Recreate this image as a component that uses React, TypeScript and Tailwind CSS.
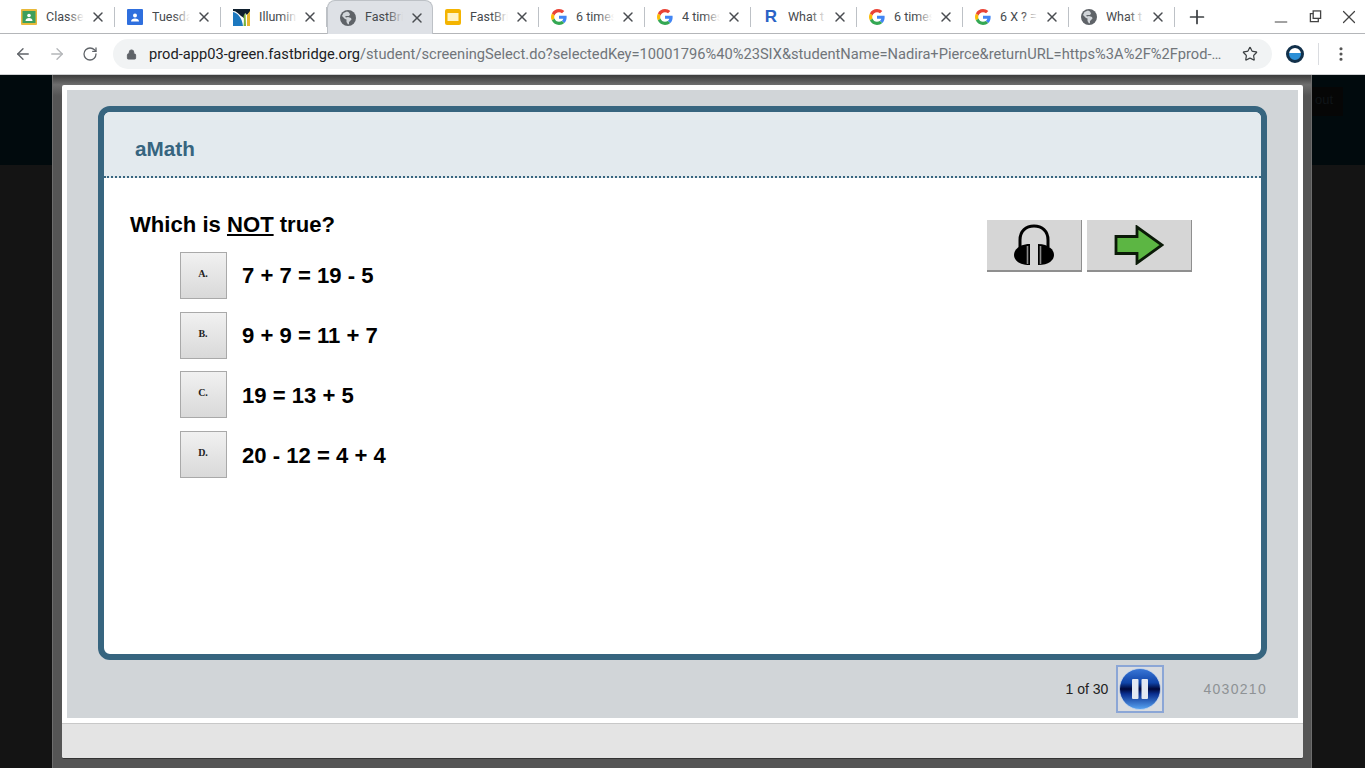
import { ArrowLeft, ArrowRight, Lock, Minus, MoreVertical, Plus, RotateCw, Star, X } from "lucide-react";
import type { ReactNode } from "react";

const GoogleG = () => (
  <svg viewBox="0 0 48 48" className="w-4 h-4">
    <path fill="#EA4335" d="M24 9.500c3.500 0 6.700 1.300 9.100 3.500l6.800-6.800C35.800 2.400 30.300 0 24 0 14.600 0 6.500 5.400 2.600 13.200l7.900 6.200C12.400 13.600 17.700 9.500 24 9.500z" />
    <path fill="#4285F4" d="M46.900 24.500c0-1.600-.1-3.100-.4-4.500H24v9h12.900c-.6 3-2.200 5.500-4.700 7.200l7.700 6c4.500-4.200 7-10.300 7-17.700z" />
    <path fill="#FBBC05" d="M10.500 28.600c-.5-1.400-.8-3-.8-4.600s.3-3.200.8-4.600l-7.900-6.200C.9 16.500 0 20.100 0 24s.9 7.500 2.600 10.800l7.900-6.200z" />
    <path fill="#34A853" d="M24 48c6.500 0 11.900-2.100 15.900-5.800l-7.700-6c-2.200 1.400-4.900 2.300-8.200 2.300-6.300 0-11.600-4.100-13.500-9.900l-7.900 6.200C6.500 42.600 14.600 48 24 48z" />
  </svg>
);

const Globe = () => (
  <svg viewBox="0 0 16 16" className="w-4 h-4">
    <circle cx="8" cy="8" r="8" fill="#5f6368" />
    <path fill="#dee1e6" d="M7 1.500 3.500 3 2 6l3 3 1.500.5V12l1.500 2.500 1-.5V12l2.500-2.500-.5-1.500-3-1-2 .5-1-1 1.500-.5L9 6l1-1.500L9 2.500z" opacity="0.9" />
  </svg>
);

const Classroom = () => (
  <svg viewBox="0 0 16 16" className="w-4 h-4">
    <rect width="16" height="16" rx="1" fill="#e8b93a" />
    <rect x="1.500" y="2" width="13" height="12" fill="#3d9f5c" />
    <circle cx="8" cy="6.500" r="1.800" fill="#fff" />
    <path d="M4.500 12c0-2 1.500-3 3.500-3s3.500 1 3.500 3z" fill="#fff" />
  </svg>
);

const Roster = () => (
  <svg viewBox="0 0 16 16" className="w-4 h-4">
    <rect width="16" height="16" rx="1" fill="#2f6fde" />
    <circle cx="8" cy="6.500" r="2" fill="#fff" />
    <path d="M4 12.500c0-2 1.800-3 4-3s4 1 4 3z" fill="#fff" />
  </svg>
);

const Illuminate = () => (
  <svg viewBox="0 0 17 17" className="h-[17px] w-[17px]">
    <path d="M0 0h17v3l-3 3-2-2-1 5-3-2C5 4 3 2 0 2z" fill="#10202e" />
    <path d="M0 3c5 1 9 6 10 14H0z" fill="#1c78bf" />
    <path d="M10.500 17c.5-4 .5-8 0-10l2-3 .5 13z" fill="#7bb33e" />
    <path d="M14 17V6l3-4v15z" fill="#e6b62f" />
  </svg>
);

const Slides = () => (
  <svg viewBox="0 0 16 16" className="w-4 h-4">
    <rect width="16" height="16" rx="2" fill="#f4b400" />
    <rect x="2.500" y="4" width="11" height="8" fill="#fff3c4" />
  </svg>
);

const Tab = ({ icon, title, active }: { icon: ReactNode; title: string; active?: boolean }) => (
  <div
    className={`relative flex h-[34px] w-[106px] shrink-0 items-center pl-3 pt-px ${
      active ? "rounded-t-lg border border-b-0 border-[#bdc1c6] bg-[#dee1e6]" : ""
    }`}
  >
    {icon}
    <div className="relative ml-[9px] w-[38px] overflow-hidden whitespace-nowrap text-[12.5px] text-[#45494d]">
      {title}
      <div className={`absolute inset-y-0 right-0 w-4 bg-linear-to-r from-transparent ${active ? "to-[#dee1e6]" : "to-white"}`} />
    </div>
    <X className="absolute left-[81px] top-[9px] h-4 w-4 text-[#4a4d51]" strokeWidth={2.2} />
    {!active && <div className="absolute right-0 top-[7px] h-5 w-px bg-[#bdc1c6]" />}
  </div>
);

const options = [
  { letter: "A.", text: "7 + 7 = 19 - 5" },
  { letter: "B.", text: "9 + 9 = 11 + 7" },
  { letter: "C.", text: "19 = 13 + 5" },
  { letter: "D.", text: "20 - 12 = 4 + 4" },
];

const App = () => {
  return (
    <div className="flex h-screen w-full flex-col overflow-hidden bg-white font-['Roboto',sans-serif]">
      {/* tab strip */}
      <div className="flex h-[34px] shrink-0 items-center border-b border-[#b4b6b9] pl-[9px]">
        <Tab icon={<Classroom />} title="Classes" />
        <Tab icon={<Roster />} title="Tuesday" />
        <Tab icon={<Illuminate />} title="Illuminate" />
        <Tab icon={<Globe />} title="FastBridge" active />
        <Tab icon={<Slides />} title="FastBridge" />
        <Tab icon={<GoogleG />} title="6 times" />
        <Tab icon={<GoogleG />} title="4 times" />
        <Tab icon={<span className="w-4 text-center font-['Liberation_Sans',sans-serif] text-[17px] font-bold leading-4 text-[#2b63c6]">R</span>} title="What t" />
        <Tab icon={<GoogleG />} title="6 times" />
        <Tab icon={<GoogleG />} title="6 X ? =" />
        <Tab icon={<Globe />} title="What t" />
        <Plus className="ml-[11px] mt-px h-[22px] w-[22px] text-[#3c4043]" strokeWidth={1.9} />
        <div className="ml-auto flex items-center pr-[5px] text-[#444]">
          <Minus className="mt-[11px] h-5 w-5" strokeWidth={1.2} />
          <svg viewBox="0 0 14 14" className="ml-[18px] h-[13px] w-[13px]" fill="none" stroke="#444" strokeWidth="1.4">
            <rect x="4.500" y="1" width="8" height="8" />
            <path d="M4.500 4H1.500v8.500H10V9" />
          </svg>
          <X className="ml-[16px] mt-px h-[22px] w-[22px]" strokeWidth={1.3} />
        </div>
      </div>

      {/* address bar */}
      <div className="flex h-[40px] shrink-0 items-center">
        <ArrowLeft className="ml-[14px] h-[18px] w-[18px] text-[#5f6368]" strokeWidth={1.8} />
        <ArrowRight className="ml-[16px] h-[18px] w-[18px] text-[#b4b6b9]" strokeWidth={1.8} />
        <RotateCw className="ml-[16px] h-[16px] w-[16px] text-[#5f6368]" strokeWidth={1.9} />
        <div className="ml-[15px] flex h-[30px] w-[1159px] items-center rounded-full bg-[#f1f3f4] pl-[13px]">
          <Lock className="h-[11px] w-[11px] fill-[#5f6368] text-[#5f6368]" strokeWidth={2} />
          <div className="ml-[12px] w-[1074px] overflow-hidden text-ellipsis whitespace-nowrap text-[14.67px] text-[#70757a]">
            <span className="text-[#202124]">prod-app03-green.fastbridge.org</span>
            /student/screeningSelect.do?selectedKey=10001796%40%23SIX&studentName=Nadira+Pierce&returnURL=https%3A%2F%2Fprod-app03-green.fastbridge.org
          </div>
          <Star className="ml-[19px] h-[16px] w-[16px] text-[#3c4043]" strokeWidth={1.8} />
        </div>
        <div className="ml-[14px] h-[18px] w-[18px] overflow-hidden rounded-full border-[3px] border-[#12304a] bg-linear-to-b from-white from-45% to-[#2b8fd6] to-45%" />
        <div className="ml-[14px] h-[22px] w-px bg-[#dadce0]" />
        <MoreVertical className="ml-[13px] h-[18px] w-[18px] text-[#555]" strokeWidth={2.2} />
      </div>

      {/* page */}
      <div className="relative flex-1 border-t border-[#cfd0d2] bg-[#141414]">
        <div className="flex h-[90px] justify-end bg-[#010a0d] pr-[22px] pt-[12px]">
          <div className="flex h-[29px] w-[31px] items-center justify-end bg-[#060606] pb-[3px] pr-[10px] font-['Liberation_Sans',sans-serif] text-[13px] text-[#101518]">
            out
          </div>
        </div>

        {/* modal */}
        <div className="absolute left-[52px] top-0 h-[693px] w-[1260px] bg-linear-to-b from-[#3c3c3c] from-0% via-[#6e6e6e] via-[1.4%] to-[#555] to-3% pl-[10px] pr-[9px] pt-[10px] shadow-[inset_1px_0_0_#6d6d6d,inset_-1px_0_0_#6d6d6d]">
          <div className="flex h-[673px] flex-col rounded-[2px] bg-white shadow-[0_1px_0_#333]">
            <div className="mx-[5px] mt-[5px] h-[628px] bg-[#d1d5d8] px-[31px] pt-[16px]">
              <div className="flex h-[554px] flex-col rounded-[12px] border-[6px] border-[#37657f] bg-white">
                <div className="flex h-[66px] shrink-0 items-center rounded-t-[6px] border-b-2 border-dotted border-[#37657f] bg-[#e3eaee] pl-[31px] pt-[10px]">
                  <span className="font-['Liberation_Sans',sans-serif] text-[20.7px] font-bold text-[#37657f]">aMath</span>
                </div>
                <div className="flex flex-1 items-start justify-between pl-[26px] pr-[69px] pt-[34px] font-['Liberation_Sans',sans-serif]">
                  <div>
                    <div className="text-[22.1px] font-bold leading-[25px] text-black">
                      Which is <span className="underline">NOT</span> true?
                    </div>
                    <div className="ml-[50px] mt-[15px] flex flex-col gap-[12.67px]">
                      {options.map((o, i) => (
                        <div key={o.letter} className="flex items-center gap-[15px]">
                          <div className="flex h-[47px] w-[47px] items-center justify-center border border-[#a9a9a9] bg-linear-to-b from-[#f1f1f1] to-[#d9d9d9] pb-[4px] pr-px font-['Liberation_Serif',serif] text-[10px] font-bold text-[#222]">
                            {o.letter}
                          </div>
                          <div className={`text-[22.1px] font-bold text-black ${i > 1 ? "mt-[2px]" : ""}`}>{o.text}</div>
                        </div>
                      ))}
                    </div>
                  </div>
                  <div className="mt-[8px] flex gap-[5px]">
                    <div className="flex h-[52px] w-[95px] items-center justify-center border-r border-b-2 border-[#8f8f8f] bg-[#d6d6d6]">
                      <svg viewBox="0 0 44 44" className="h-[44px] w-[44px]">
                        <path d="M8 24V17C8 8 14 3 22 3s14 5 14 14v7" fill="none" stroke="#000" strokeWidth="3" />
                        <path d="M18 21C7 21 2 27 2 32s5 10 16 10z" fill="#000" />
                        <path d="M26 21c11 0 16 6 16 11s-5 10-16 10z" fill="#000" />
                        <path d="M15.500 23v18M28.500 23v18" stroke="#8a8a8a" strokeWidth="1.6" />
                      </svg>
                    </div>
                    <div className="flex h-[52px] w-[105px] items-center justify-center border-r border-b-2 border-[#8f8f8f] bg-[#d6d6d6]">
                      <svg viewBox="0 0 50 40" className="h-[40px] w-[50px]">
                        <path d="M2 11.500h21V2l25 18-25 18v-9.500H2z" fill="#5cb643" stroke="#0b1a08" strokeWidth="2.8" strokeLinejoin="miter" />
                      </svg>
                    </div>
                  </div>
                </div>
              </div>

              <div className="flex h-[58px] items-center justify-end font-['Liberation_Sans',sans-serif]">
                <span className="text-[14px] text-[#222]">1 of 30</span>
                <div className="ml-2 flex h-[48px] w-[48px] items-center justify-center border-2 border-[#8ba6d6] bg-[#d9dce0]">
                  <svg viewBox="0 0 42 42" className="h-[42px] w-[42px]">
                    <defs>
                      <linearGradient id="orb" x1="0" y1="0" x2="0" y2="1">
                        <stop offset="0" stopColor="#3a78d8" />
                        <stop offset="0.35" stopColor="#1044a8" />
                        <stop offset="0.5" stopColor="#00083a" />
                        <stop offset="0.62" stopColor="#0a2f90" />
                        <stop offset="1" stopColor="#5aa6f4" />
                      </linearGradient>
                    </defs>
                    <circle cx="21" cy="21" r="20.500" fill="url(#orb)" stroke="#c5d6ee" strokeWidth="0.8" />
                    <rect x="13" y="11" width="6.500" height="20" rx="1" fill="#e4e9f2" />
                    <rect x="22.500" y="11" width="6.500" height="20" rx="1" fill="#e4e9f2" />
                  </svg>
                </div>
                <span className="ml-[39px] text-[14px] tracking-[1.3px] text-[#8e9295]">4030210</span>
              </div>
            </div>
            <div className="mt-[5px] flex-1 rounded-b-[2px] border-t border-[#c8c8c8] bg-[#e4e4e4]" />
          </div>
        </div>
      </div>
    </div>
  );
};

export default App;
